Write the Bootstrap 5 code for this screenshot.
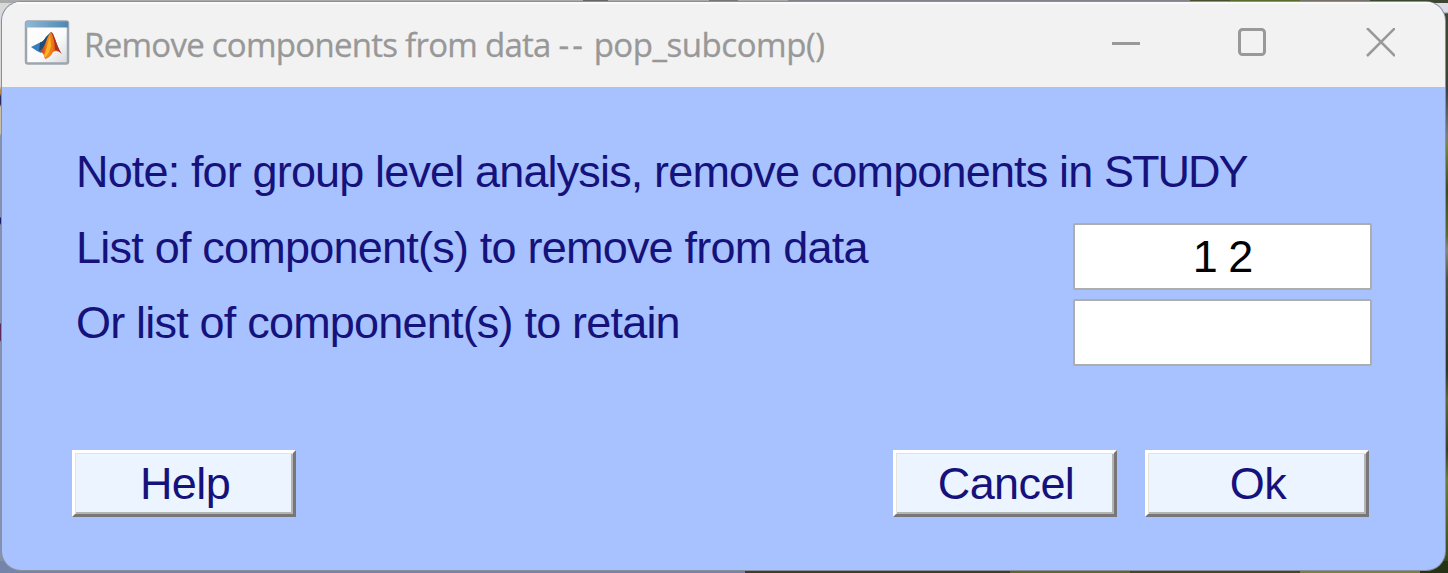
<!DOCTYPE html>
<html lang="en">
<head>
<meta charset="utf-8">
<title>Remove components from data</title>
<link href="https://cdn.jsdelivr.net/npm/bootstrap@5.3.0/dist/css/bootstrap.min.css" rel="stylesheet">
<style>
body{height:573px;overflow:hidden;padding:2px 3px 3px 2px;
 background:
  linear-gradient(90deg,#aaa 0 583px,#666 583px 608px,#aaa 608px 709px,#777 709px 738px,#aaa 738px 788px,#85838a 788px 1190px,#46502e 1190px 1230px,#5b6a2d 1230px 1300px,#76706c 1300px 1370px,#3c4630 1370px) 0 0/100% 3px no-repeat,
  linear-gradient(90deg,#7484ab 0 745px,#39402a 745px 1010px,#566b24 1010px 1130px,#3c4c20 1130px 1300px,#71863a 1300px 1420px,#263214 1420px) 0 100%/100% 12px no-repeat,
  linear-gradient(#dcdce8 0 12px,#3c4630 14px 70px,#3a4040 90px,#777c84 135px,#7b8642 145px,#3c4725 190px,#5b6a2d 235px,#818a80 250px,#46533a 280px,#2c3526 370px,#59693a 400px,#34402a 450px,#6b7d38 480px,#33401c) 100% 0/20px 100% no-repeat,
  linear-gradient(#d8d8d8 0 86px,#b98a50 90px 93px,#2b2a62 97px 104px,#c9bfa8 107px 133px,#8491ae 136px 217px,#1d1a66 218px 223px,#8491ae 225px 323px,#5b2a5a 324px 340px,#8491ae 342px) 0 0/20px 100% no-repeat;
 font-family:"Liberation Sans",Arial,sans-serif}
.dlg{background:#a8c1ff;border-radius:19px;overflow:hidden;height:568px;box-shadow:0 0 0 1px #8b8f9b}
.bar{height:85px;background:#f2f2f2;border-top:2px solid #fafafa;border-bottom:1px solid #f6f3ee;padding-left:22px;padding-right:50px}
.appicon{margin-top:-4px}
.ttl{font:33px/40px "Open Sans","Segoe UI",sans-serif;color:#989898;-webkit-text-stroke:.3px #989898;letter-spacing:-.73px;margin-left:14px;white-space:nowrap}
.dash{letter-spacing:3px}
.fn{letter-spacing:-.45px}
.wbtns{gap:97px;margin-top:-5px}
.pane{padding:47px 73px 0 74px;color:#15127c;font-size:45px;line-height:75.5px;white-space:nowrap}
.line{height:75.5px}
.note{letter-spacing:-.85px}.caps{letter-spacing:-2px}.l1{letter-spacing:-.78px}.l2{letter-spacing:-.8px}
.entry{width:299px;height:67px;margin-top:13.5px;border:2px solid #adadad;border-radius:2px;background:#fff;color:#000;font-size:45px;letter-spacing:-1px;text-align:center;padding:0}
.push{width:224px;height:67px;font-size:45px;line-height:62px;letter-spacing:-.6px;color:#15127c;background:#ecf5ff;padding:0 0 0 2px;border-radius:0;border:3px solid;border-color:#fff #777 #777 #fff;box-shadow:inset 1px 1px #e6e3df,inset -2px -2px #b4b4b4}
.acts{padding:89.5px 76px 0 70px}
.okb{margin-left:28px}
</style>
</head>
<body>
<main class="dlg">
 <header class="bar d-flex align-items-center">
  <svg class="appicon" width="46" height="46" viewBox="0 0 46 46">
   <defs>
    <linearGradient id="fr" x2="1" y2="1"><stop stop-color="#fff"/><stop offset=".6" stop-color="#fafafa"/><stop offset="1" stop-color="#d5d9dd"/></linearGradient>
    <linearGradient id="tb" x2="1"><stop stop-color="#91b9d5"/><stop offset="1" stop-color="#4d87b5"/></linearGradient>
    <linearGradient id="fl"><stop stop-color="#b82d14"/><stop offset=".35" stop-color="#f48a18"/><stop offset=".55" stop-color="#ef7a18"/><stop offset="1" stop-color="#b3261d"/></linearGradient>
   </defs>
   <rect x="2" y="1.500" width="42" height="42" rx="2" fill="url(#fr)" stroke="#9da5ae" stroke-width="2.500"/>
   <path d="M2 1.500H44V7.500H2Z" fill="url(#tb)"/>
   <path d="M7 27L16 22.500Q19 22 22 17L27 12L22 28L17 33L13 31Z" fill="#347fb9"/>
   <path d="M16 22.500Q19 22 22 17L27 12L20 28L15 31Z" fill="#214b79"/>
   <path d="M27 12C30 12 33 28 38 34Q33 29 29 32Q26 38 21 39Q20 33 16 31C21 29 23 15 27 12Z" fill="url(#fl)"/>
   <path d="M27 12C30 12 33 28 38 34Q33 29 31 30Q31 20 27 12Z" fill="#a93022"/>
   <path d="M26 15C24 23 22 31 20 35L21 38Q25 34 27 26Z" fill="#ffb229"/>
  </svg>
  <div class="ttl">Remove components from data <span class="dash">--</span> <span class="fn">pop_subcomp()</span></div>
  <div class="wbtns ms-auto d-flex align-items-center">
   <svg width="30" height="30" fill="none" stroke="#999" stroke-width="3"><path d="M1 15.500H29"/></svg>
   <svg width="30" height="30" fill="none" stroke="#999" stroke-width="3"><rect x="1.500" y="1.500" width="25" height="25" rx="3"/></svg>
   <svg width="30" height="30" fill="none" stroke="#999" stroke-width="2.500"><path d="M2 0L30 28M30 0L2 28"/></svg>
  </div>
 </header>
 <section class="pane">
  <div class="note">Note: for group level analysis, remove components in <span class="caps">STUDY</span></div>
  <div class="line d-flex justify-content-between"><label class="l1" for="rm">List of component(s) to remove from data</label><input id="rm" class="entry" value="1 2"></div>
  <div class="line d-flex justify-content-between"><label class="l2" for="rt">Or list of component(s) to retain</label><input id="rt" class="entry"></div>
 </section>
 <footer class="acts d-flex">
  <button class="btn push">Help</button>
  <button class="btn push ms-auto">Cancel</button>
  <button class="btn push okb">Ok</button>
 </footer>
</main>
<script src="https://cdn.jsdelivr.net/npm/bootstrap@5.3.0/dist/js/bootstrap.bundle.min.js"></script>
</body>
</html>
